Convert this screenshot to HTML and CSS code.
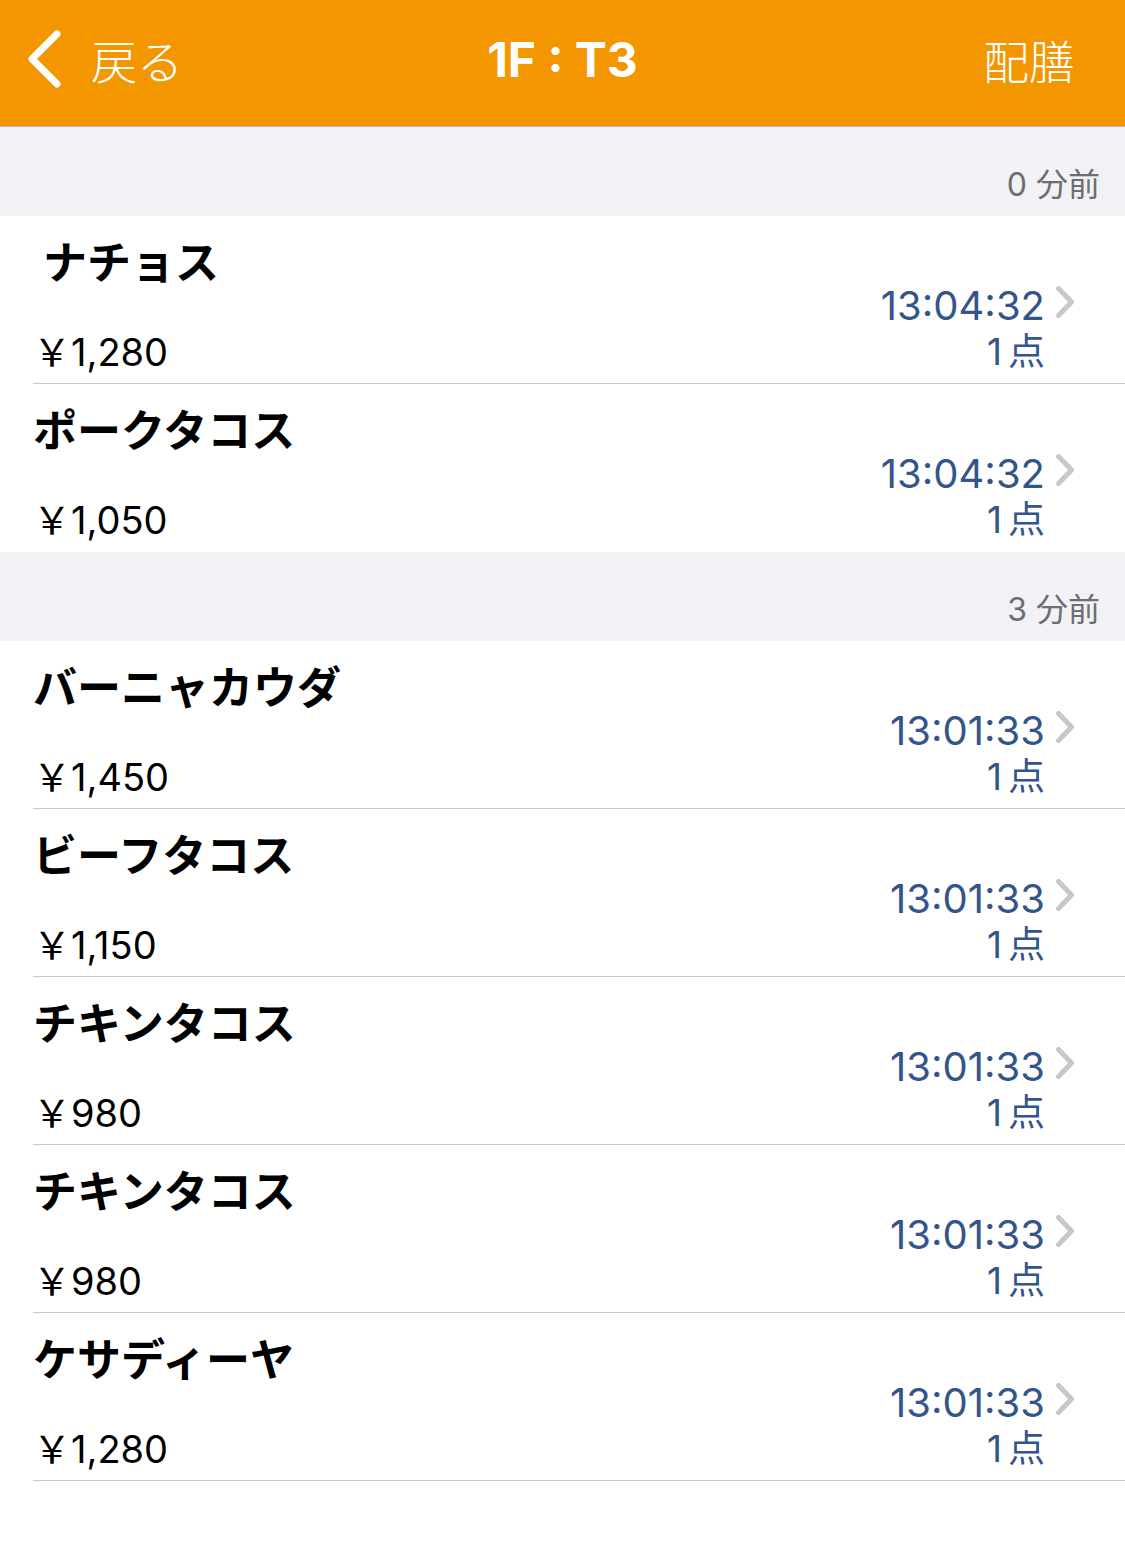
FILE: index.html
```html
<!DOCTYPE html>
<html lang="ja">
<head>
  <meta charset="UTF-8">
  <meta name="viewport" content="width=device-width,initial-scale=1">
  <title>1F : T3</title>
  <link rel="stylesheet" href="styles.css">
</head>
<body>
  <div class="nav-bar">
    <div class="nav-back">
      <svg class="back-icon" viewBox="0 0 40 60">
        <polyline points="32,5 7,30 32,55" fill="none" stroke="#fff" stroke-width="7" stroke-linecap="round" stroke-linejoin="round"/>
      </svg>
      <span>戻る</span>
    </div>
    <div class="nav-title">1F : T3</div>
    <div class="nav-action">配膳</div>
  </div>

  <div class="section-head">0 分前</div>
  <div class="order">
    <div class="order-cell">
      <div class="order-left">
        <div class="order-name">&nbsp;ナチョス</div>
        <div class="order-price">￥1,280</div>
      </div>
      <div class="order-right">
        <div class="order-time">13:04:32</div>
        <div class="order-qty">1<span class="qty-unit">点</span></div>
      </div>
      <svg class="chev" viewBox="0 0 20 34"><polyline points="3.5,3.5 16.5,17 3.5,30.5" fill="none" stroke="#c7c7cc" stroke-width="5" stroke-linecap="round" stroke-linejoin="round"/></svg>
    </div>
  </div>
  <div class="order last">
    <div class="order-cell">
      <div class="order-left">
        <div class="order-name">ポークタコス</div>
        <div class="order-price">￥1,050</div>
      </div>
      <div class="order-right">
        <div class="order-time">13:04:32</div>
        <div class="order-qty">1<span class="qty-unit">点</span></div>
      </div>
      <svg class="chev" viewBox="0 0 20 34"><polyline points="3.5,3.5 16.5,17 3.5,30.5" fill="none" stroke="#c7c7cc" stroke-width="5" stroke-linecap="round" stroke-linejoin="round"/></svg>
    </div>
  </div>

  <div class="section-head">3 分前</div>
  <div class="order">
    <div class="order-cell">
      <div class="order-left">
        <div class="order-name">バーニャカウダ</div>
        <div class="order-price">￥1,450</div>
      </div>
      <div class="order-right">
        <div class="order-time">13:01:33</div>
        <div class="order-qty">1<span class="qty-unit">点</span></div>
      </div>
      <svg class="chev" viewBox="0 0 20 34"><polyline points="3.5,3.5 16.5,17 3.5,30.5" fill="none" stroke="#c7c7cc" stroke-width="5" stroke-linecap="round" stroke-linejoin="round"/></svg>
    </div>
  </div>
  <div class="order">
    <div class="order-cell">
      <div class="order-left">
        <div class="order-name">ビーフタコス</div>
        <div class="order-price">￥1,150</div>
      </div>
      <div class="order-right">
        <div class="order-time">13:01:33</div>
        <div class="order-qty">1<span class="qty-unit">点</span></div>
      </div>
      <svg class="chev" viewBox="0 0 20 34"><polyline points="3.5,3.5 16.5,17 3.5,30.5" fill="none" stroke="#c7c7cc" stroke-width="5" stroke-linecap="round" stroke-linejoin="round"/></svg>
    </div>
  </div>
  <div class="order">
    <div class="order-cell">
      <div class="order-left">
        <div class="order-name">チキンタコス</div>
        <div class="order-price">￥980</div>
      </div>
      <div class="order-right">
        <div class="order-time">13:01:33</div>
        <div class="order-qty">1<span class="qty-unit">点</span></div>
      </div>
      <svg class="chev" viewBox="0 0 20 34"><polyline points="3.5,3.5 16.5,17 3.5,30.5" fill="none" stroke="#c7c7cc" stroke-width="5" stroke-linecap="round" stroke-linejoin="round"/></svg>
    </div>
  </div>
  <div class="order">
    <div class="order-cell">
      <div class="order-left">
        <div class="order-name">チキンタコス</div>
        <div class="order-price">￥980</div>
      </div>
      <div class="order-right">
        <div class="order-time">13:01:33</div>
        <div class="order-qty">1<span class="qty-unit">点</span></div>
      </div>
      <svg class="chev" viewBox="0 0 20 34"><polyline points="3.5,3.5 16.5,17 3.5,30.5" fill="none" stroke="#c7c7cc" stroke-width="5" stroke-linecap="round" stroke-linejoin="round"/></svg>
    </div>
  </div>
  <div class="order">
    <div class="order-cell">
      <div class="order-left">
        <div class="order-name">ケサディーヤ</div>
        <div class="order-price">￥1,280</div>
      </div>
      <div class="order-right">
        <div class="order-time">13:01:33</div>
        <div class="order-qty">1<span class="qty-unit">点</span></div>
      </div>
      <svg class="chev" viewBox="0 0 20 34"><polyline points="3.5,3.5 16.5,17 3.5,30.5" fill="none" stroke="#c7c7cc" stroke-width="5" stroke-linecap="round" stroke-linejoin="round"/></svg>
    </div>
  </div>
</body>
</html>
```

FILE: styles.css
```css
html, body {margin: 0; padding: 0; background: #fff; font-family: Inter, "Noto Sans CJK JP", sans-serif; color: #000;}

/* ナビゲーションバー */
.nav-bar {height: 127px; background: #f49600; border-bottom: 1px solid #b3b3bb; display: flex; align-items: center; justify-content: space-between; color: #fff; padding: 0 50px 8px 25px; box-sizing: border-box; position: relative;}
.nav-back {display: flex; align-items: center; gap: 26px; font-size: 46px; font-family: "Noto Sans CJK JP", sans-serif; font-weight: 300;}
.back-icon {width: 40px; height: 60px; display: block;}
.nav-title {position: absolute; left: 0; right: 0; top: 0; bottom: 8px; display: flex; align-items: center; justify-content: center; font-size: 48px; font-weight: 700; pointer-events: none;}
.nav-action {font-size: 46px; font-family: "Noto Sans CJK JP", sans-serif; font-weight: 300;}

/* セクション見出し */
.section-head {height: 89px; background: #f1f1f6; display: flex; align-items: flex-end; justify-content: flex-end; padding-right: 25px; box-sizing: border-box; font-size: 32px; line-height: 62px; color: #6d6d72;}

/* 注文行 */
.order {padding-left: 33px;}
.order-cell {height: 167px; border-bottom: 1px solid #c8c7cc; display: flex; padding-right: 50px;}
.order.last .order-cell {border-bottom-color: #fff;}
.order-left {flex: 1; display: flex; flex-direction: column; justify-content: space-between; padding: 20px 0 9px;}
.order-name {font-size: 44px; line-height: 48px; font-weight: 700; font-family: "Noto Sans CJK JP", sans-serif;}
.order-price {font-size: 38px; line-height: 44px;}
.order-right {display: flex; flex-direction: column; justify-content: flex-end; align-items: flex-end; padding-bottom: 8px; margin-right: 10px; color: #34558b;}
.order-time {font-size: 40px; line-height: 46px;}
.order-qty {font-size: 37px; line-height: 46px;}
.qty-unit {margin-left: 6px;}
.chev {width: 20px; height: 34px; margin-top: 69px; flex: none;}
```
